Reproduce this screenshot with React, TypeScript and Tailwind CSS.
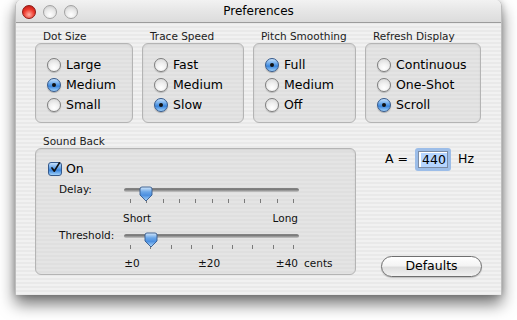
import React from "react";

const font = { fontFamily: '"DejaVu Sans", "Liberation Sans", sans-serif' };

function Radio({ label, on }: { label: string; on?: boolean }) {
  return (
    <div className="flex items-center h-[20px] gap-[5px]">
      {on ? (
        <div className="w-[14px] h-[14px] rounded-full border border-[#34598c] bg-[linear-gradient(180deg,#c4e0fb_0%,#5c9ee6_45%,#3a85dc_60%,#9fd0fa_100%)] flex items-center justify-center shadow-[0_1px_1px_rgba(0,0,0,0.25)]">
          <div className="w-[4px] h-[4px] rounded-full bg-[#111]" />
        </div>
      ) : (
        <div className="w-[14px] h-[14px] rounded-full border border-[#7e7e7e] bg-[radial-gradient(circle_at_50%_75%,#ffffff_0%,#f2f2f2_40%,#d4d4d4_100%)] shadow-[0_1px_1px_rgba(0,0,0,0.2)]" />
      )}
      <span className="text-[12.5px] text-black leading-none">{label}</span>
    </div>
  );
}

function Group({ title, width, items, selected }: { title: string; width: number; items: string[]; selected: number }) {
  return (
    <div className="flex flex-col" style={{ width }}>
      <div className="h-[13px] pl-[8px] text-[10.5px] leading-[13px] text-[#1c1c1c] whitespace-nowrap">{title}</div>
      <div className="h-[80px] rounded-[6px] border border-[#b4b4b4] bg-[repeating-linear-gradient(180deg,#e4e4e4_0px,#e4e4e4_2px,#dfdfdf_2px,#dfdfdf_4px)] pt-[11px] pl-[11px] shadow-[inset_0_1px_2px_rgba(0,0,0,0.08)]">
        {items.map((it, i) => (
          <Radio key={it} label={it} on={i === selected} />
        ))}
      </div>
    </div>
  );
}

function Slider({ id, thumb, ticks }: { id: string; thumb: number; ticks: number }) {
  const step = 163 / (ticks - 1);
  const c = thumb;
  return (
    <svg width="180" height="18" viewBox="0 0 180 18" className="block">
      <defs>
        <linearGradient id={`tr-${id}`} x1="0" y1="0" x2="0" y2="1">
          <stop offset="0" stopColor="#5a5a5a" />
          <stop offset="0.5" stopColor="#8c8c8c" />
          <stop offset="1" stopColor="#c8c8c8" />
        </linearGradient>
        <linearGradient id={`th-${id}`} x1="0" y1="0" x2="0" y2="1">
          <stop offset="0" stopColor="#d6e9fb" />
          <stop offset="0.35" stopColor="#6aa6e8" />
          <stop offset="0.6" stopColor="#4b8fe0" />
          <stop offset="1" stopColor="#b4dcfb" />
        </linearGradient>
      </defs>
      <rect x="2" y="2.2" width="175" height="3.8" rx="1.9" fill={`url(#tr-${id})`} />
      {Array.from({ length: ticks }).map((_, i) => {
        const x = Math.round(8 + i * step) + 0.5;
        return <line key={i} x1={x} x2={x} y1="13" y2="17" stroke="#7a7a7a" strokeWidth="1" />;
      })}
      <path
        d={`M${c - 6},3 Q${c - 6},1 ${c - 4},1 L${c + 4},1 Q${c + 6},1 ${c + 6},3 L${c + 6},9 L${c},15 L${c - 6},9 Z`}
        fill={`url(#th-${id})`}
        stroke="#34598c"
        strokeWidth="0.9"
      />
    </svg>
  );
}

export default function App() {
  return (
    <div className="w-[517px] h-[320px] bg-white pl-[15px]" style={font}>
      <div className="w-[487px] h-[295px] rounded-t-[6px] overflow-hidden bg-[repeating-linear-gradient(180deg,#f1f1f1_0px,#f1f1f1_2px,#e9e9e9_2px,#e9e9e9_4px)] shadow-[0_9px_16px_rgba(0,0,0,0.55),0_0_6px_rgba(0,0,0,0.2)] border-x border-[#bdbdbd]">
        {/* title bar */}
        <div className="h-[23px] grid grid-cols-[1fr_auto_1fr] items-center border-b border-[#9c9c9c] bg-[linear-gradient(180deg,#f2f2f2_0%,#e6e6e6_50%,#dcdcdc_100%)]">
          <div className="flex items-center gap-[7px] pl-[6px] pt-[2px]">
            <div className="w-[14px] h-[14px] rounded-full border border-[#8e1712] bg-[radial-gradient(circle_at_50%_72%,#ffb0a4_0%,#ee3a2e_50%,#b0140e_100%)]" />
            <div className="w-[14px] h-[14px] rounded-full border border-[#a2a2a2] bg-[radial-gradient(circle_at_50%_72%,#ffffff_0%,#e6e6e6_55%,#c4c4c4_100%)]" />
            <div className="w-[14px] h-[14px] rounded-full border border-[#a2a2a2] bg-[radial-gradient(circle_at_50%_72%,#ffffff_0%,#e6e6e6_55%,#c4c4c4_100%)]" />
          </div>
          <div className="text-[12px] text-black leading-none">Preferences</div>
          <div />
        </div>

        {/* content */}
        <div className="pl-[19px] pt-[7px]">
          <div className="flex gap-[9px]">
            <Group title="Dot Size" width={98} items={["Large", "Medium", "Small"]} selected={1} />
            <Group title="Trace Speed" width={102} items={["Fast", "Medium", "Slow"]} selected={2} />
            <Group title="Pitch Smoothing" width={103} items={["Full", "Medium", "Off"]} selected={0} />
            <Group title="Refresh Display" width={116} items={["Continuous", "One-Shot", "Scroll"]} selected={2} />
          </div>

          <div className="flex mt-[12px]">
            {/* Sound Back */}
            <div className="w-[321px] flex flex-col">
              <div className="h-[13px] pl-[8px] text-[10.5px] leading-[13px] text-[#1c1c1c]">Sound Back</div>
              <div className="h-[127px] rounded-[6px] border border-[#b4b4b4] bg-[repeating-linear-gradient(180deg,#e4e4e4_0px,#e4e4e4_2px,#dfdfdf_2px,#dfdfdf_4px)] shadow-[inset_0_1px_2px_rgba(0,0,0,0.08)] pt-[13px] pl-[12px]">
                <div className="flex items-center h-[14px] gap-[4px]">
                  <div className="w-[14px] h-[14px] rounded-[3px] border border-[#34598c] bg-[linear-gradient(180deg,#c4e0fb_0%,#5c9ee6_45%,#3a85dc_60%,#9fd0fa_100%)] flex items-center justify-center">
                    <svg width="14" height="14" viewBox="0 0 14 14" className="-mt-[3px] ml-[1px]">
                      <path d="M2.5,7 L5.5,11 L12,0.5" fill="none" stroke="#111" strokeWidth="2.2" strokeLinecap="round" strokeLinejoin="round" />
                    </svg>
                  </div>
                  <span className="text-[12.5px] leading-none text-black">On</span>
                </div>

                <div className="flex mt-[10px] pl-[11px]">
                  <div className="w-[63px] h-[8px] flex items-center text-[10.5px] text-[#111]">Delay:</div>
                  <Slider id="d" thumb={24} ticks={11} />
                </div>
                <div className="flex mt-[8px] pl-[74px] w-[254px] h-[13px] items-center justify-between text-[10.5px] text-[#111]">
                  <span className="pl-[1px]">Short</span>
                  <span className="pr-[4px]">Long</span>
                </div>

                <div className="flex mt-[7px] pl-[11px]">
                  <div className="w-[63px] h-[8px] flex items-center text-[10.5px] text-[#111]">Threshold:</div>
                  <Slider id="t" thumb={29} ticks={9} />
                </div>
                <div className="flex mt-[7px] pl-[74px] h-[13px] items-center text-[10.5px] text-[#111] whitespace-nowrap">
                  <span className="w-[20px] text-center">±0</span>
                  <span className="ml-[56px] w-[21px] text-center">±20</span>
                  <span className="w-[79px] text-right">±40</span>
                  <span className="ml-[6px]">cents</span>
                </div>
              </div>
            </div>

            {/* right column */}
            <div className="ml-[9px] w-[117px] flex flex-col">
              <div className="flex items-center mt-[13px] h-[23px] pl-[20px] text-[12.5px] text-black">
                <span>A =</span>
                <div className="ml-[7px] w-[36px] h-[23px] rounded-[3px] bg-[#9cbde8] p-[3px]">
                  <div className="w-full h-full bg-white border border-[#7c8ca4] flex items-center pl-[2px]">
                    <span className="bg-[#b5d5ff] leading-[14px] px-[1px]">440</span>
                  </div>
                </div>
                <span className="ml-[7px]">Hz</span>
              </div>
              <div className="mt-[85px] ml-[16px] w-[101px] h-[21px] rounded-full border border-[#6f6f6f] bg-[linear-gradient(180deg,#ffffff_0%,#f4f4f4_45%,#dedede_55%,#f2f2f2_100%)] shadow-[0_1px_1px_rgba(0,0,0,0.2)] flex items-center justify-center text-[12.5px] text-black">
                Defaults
              </div>
            </div>
          </div>
        </div>
      </div>
    </div>
  );
}
